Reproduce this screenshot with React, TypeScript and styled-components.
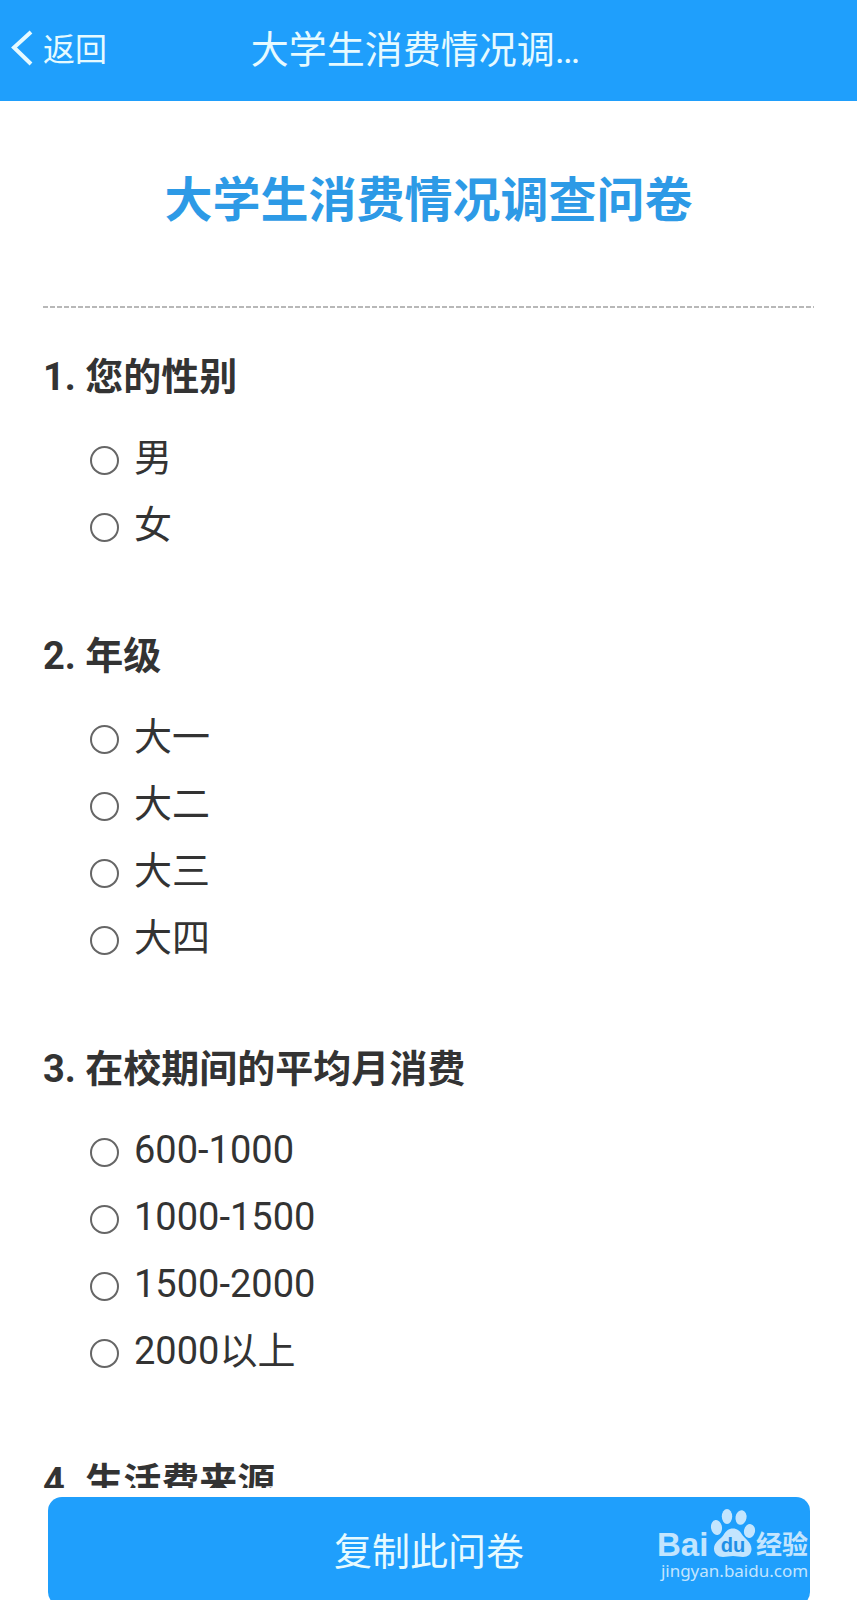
import React from "react";
import styled, { createGlobalStyle } from "styled-components";

const GlobalStyle = createGlobalStyle`
  *, *::before, *::after { box-sizing: border-box; }
  body {
    margin: 0;
    background: #fff;
    color: #333;
    font-family: Roboto, "Noto Sans CJK SC", sans-serif;
  }
`;

const Screen = styled.div`
  display: flex;
  flex-direction: column;
  height: 100vh;
  overflow: hidden;
`;

const TopBar = styled.header`
  flex: none;
  display: grid;
  grid-template-columns: 1fr auto 1fr;
  align-items: center;
  height: 101px;
  padding: 0 36px 2px 10px;
  background: #1f9ffc;
  color: #e6faff;
`;

const BackButton = styled.button`
  justify-self: start;
  display: flex;
  align-items: center;
  gap: 9px;
  padding: 0;
  border: 0;
  background: none;
  color: inherit;
  font: inherit;
  font-size: 32px;
  line-height: 48px;

  svg { display: block; margin-bottom: 4px; }
`;

const BarTitle = styled.div`
  font-size: 38px;
  line-height: 56px;
`;

const Content = styled.main`
  flex: 1;
  min-height: 0;
  overflow-y: auto;
  scrollbar-width: none;
  padding: 0 43px;
`;

const SurveyTitle = styled.h1`
  margin: 0;
  padding: 65px 0 70px;
  color: #2d9ae6;
  font-size: 48px;
  font-weight: 700;
  line-height: 70px;
  text-align: center;
`;

const Divider = styled.hr`
  height: 2px;
  margin: 0;
  border: 0;
  background: repeating-linear-gradient(to right, #b8b8b8 0 5px, transparent 5px 7px);
`;

const Form = styled.form`
  padding-top: 41px;
`;

const Question = styled.fieldset`
  margin: 0 0 64px;
  padding: 0;
  border: 0;
  min-width: 0;
`;

const QuestionTitle = styled.legend`
  padding: 0;
  margin-bottom: 25px;
  font-size: 38px;
  font-weight: 700;
  line-height: 56px;
`;

const Option = styled.label`
  display: flex;
  align-items: center;
  gap: 15px;
  height: 67px;
  padding: 0 0 11px 47px;
  font-size: 38px;
  line-height: 56px;
`;

const Radio = styled.input`
  appearance: none;
  flex: none;
  width: 29px;
  height: 29px;
  margin: 4px 0 0;
  border: 2px solid #666;
  border-radius: 50%;
  background: #fff;

  &:checked { background: radial-gradient(#1f9ffc 0 7px, #fff 8px); }
`;

const BottomBar = styled.footer`
  position: relative;
  flex: none;
  height: 112px;
  padding: 9px 47px 0 48px;
  overflow: hidden;
  background: #fff;
`;

const CopyButton = styled.button`
  display: block;
  width: 100%;
  height: 109px;
  padding: 0 0 6px;
  border: 0;
  border-radius: 14px;
  background: #1f9ffc;
  color: #e6faff;
  font: inherit;
  font-size: 38px;
`;

const Watermark = styled.a`
  position: absolute;
  top: 19px;
  right: 45px;
  width: 155px;
  color: #c3e5fe;
  font-family: "Noto Sans", sans-serif;
  font-size: 17px;
  line-height: 24px;
  text-align: center;
  white-space: nowrap;
  text-decoration: none;

  svg { display: block; }
`;

const questions = [
  { title: "您的性别", options: ["男", "女"] },
  { title: "年级", options: ["大一", "大二", "大三", "大四"] },
  { title: "在校期间的平均月消费", options: ["600-1000", "1000-1500", "1500-2000", "2000以上"] },
  { title: "生活费来源", options: [] },
];

function BackIcon() {
  return (
    <svg width="24" height="36" viewBox="0 0 24 36" fill="none" stroke="currentColor" strokeWidth="4" aria-hidden="true">
      <path d="M21 2 4 17.500 21 34" />
    </svg>
  );
}

function Logo() {
  return (
    <svg width="155" height="52" viewBox="0 0 155 52" fill="currentColor" aria-hidden="true">
      <text x="0" y="49" fontFamily="Liberation Sans" fontWeight="700" fontSize="33">Bai</text>
      <ellipse cx="59.500" cy="20.500" rx="5.500" ry="7.500" transform="rotate(-8 59.500 20.500)" />
      <ellipse cx="70" cy="9.500" rx="5.200" ry="7.500" />
      <ellipse cx="84" cy="10.500" rx="5.500" ry="7.300" transform="rotate(10 84 10.500)" />
      <ellipse cx="92.500" cy="24" rx="5.500" ry="7" transform="rotate(12 92.500 24)" />
      <path d="M76 21.500c4 0 7 2.500 9 6 2 3.500 9.500 7.500 9.500 14.500 0 5-3.500 8-8.500 8-4 0-6-1-10-1s-6 1-10 1c-5 0-9-3-9-8.500 0-6.500 7-9.500 9.500-13.500 2.500-4 5-6.500 9.500-6.500Z" />
      <text x="76" y="45" textAnchor="middle" fill="#1f8fe6" fontFamily="Liberation Sans" fontWeight="700" fontSize="20">du</text>
      <text x="99" y="47" fontFamily="Noto Sans CJK SC" fontWeight="700" fontSize="26">经验</text>
    </svg>
  );
}

export default function App() {
  return (
    <Screen>
      <GlobalStyle />
      <TopBar>
        <BackButton type="button">
          <BackIcon />
          返回
        </BackButton>
        <BarTitle>大学生消费情况调…</BarTitle>
      </TopBar>
      <Content>
        <SurveyTitle>大学生消费情况调查问卷</SurveyTitle>
        <Divider />
        <Form>
          {questions.map((question, index) => (
            <Question key={question.title}>
              <QuestionTitle>
                {index + 1}. {question.title}
              </QuestionTitle>
              {question.options.map((option) => (
                <Option key={option}>
                  <Radio type="radio" name={`question-${index + 1}`} value={option} />
                  {option}
                </Option>
              ))}
            </Question>
          ))}
        </Form>
      </Content>
      <BottomBar>
        <CopyButton type="button">复制此问卷</CopyButton>
        <Watermark href="#jingyan">
          <Logo />
          jingyan.baidu.com
        </Watermark>
      </BottomBar>
    </Screen>
  );
}
